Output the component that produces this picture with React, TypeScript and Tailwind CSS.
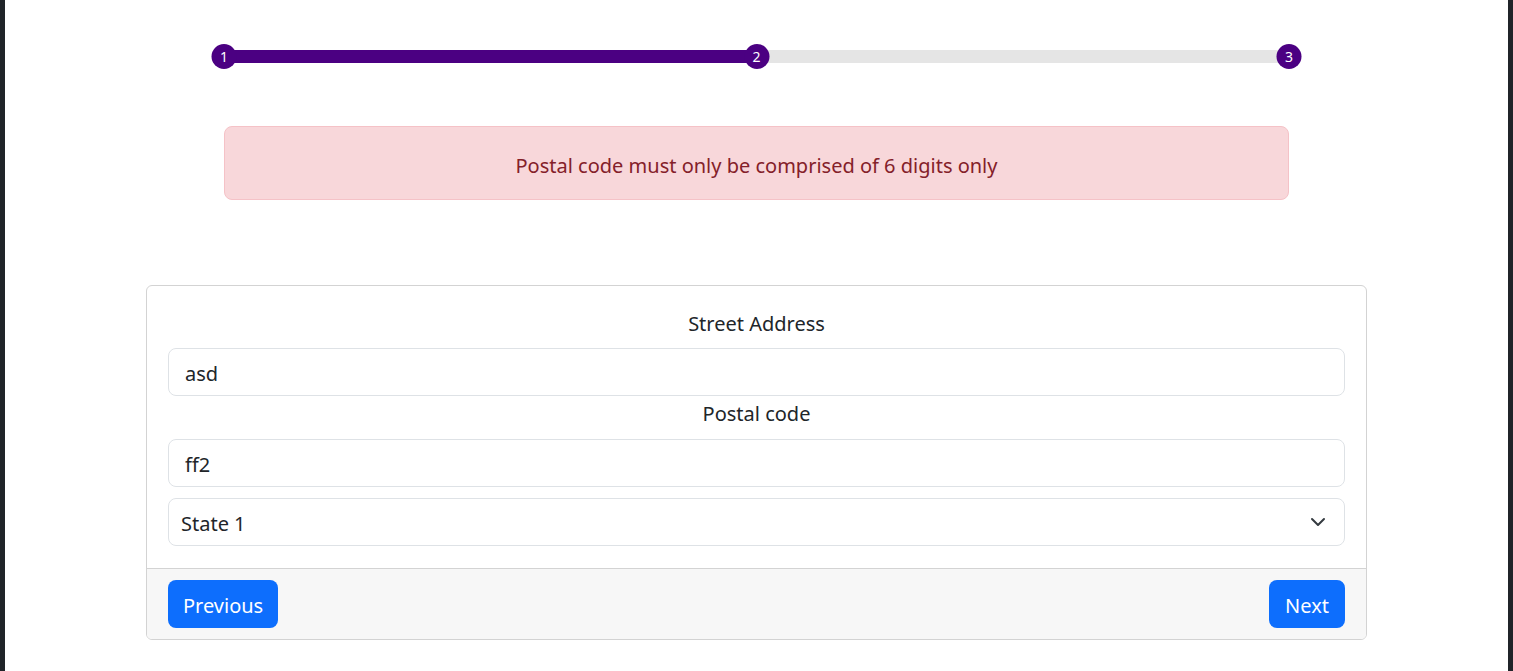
import React from 'react';

const steps = [1, 2, 3];

function Stepper({ current }: { current: number }) {
  const pct = ((current - 1) / (steps.length - 1)) * 100;
  return (
    <div className="relative mx-auto h-[25px] w-[1065px]">
      <div className="absolute left-0 right-0 top-[6px] h-[13px] bg-[#e5e5e5]">
        <div className="h-full bg-[#4b0082]" style={{ width: `${pct}%` }} />
      </div>
      {steps.map((s, i) => (
        <div
          key={s}
          className="absolute top-0 flex h-[25px] w-[25px] -translate-x-1/2 items-center justify-center rounded-full bg-[#4b0082] text-[14px] text-white"
          style={{ left: `${(i / (steps.length - 1)) * 100}%` }}
        >
          {s}
        </div>
      ))}
    </div>
  );
}

export default function App() {
  return (
    <div
      className="flex min-h-[671px] bg-white text-[#212529]"
      style={{ fontFamily: '"Noto Sans", "Open Sans", sans-serif' }}
    >
      <div className="w-[5px] shrink-0 bg-[#202429]" />
      <div className="flex-1 pt-[44px]">
        <Stepper current={2} />

        <div className="mx-auto mt-[57px] w-[1065px] rounded-lg border border-[#f5c2c7] bg-[#f8d7da] pt-[24px] pb-[18px] text-center text-[20px] leading-[30px] text-[#842029]">
          Postal code must only be comprised of 6 digits only
        </div>

        <div className="mx-auto mt-[85px] w-[1221px] overflow-hidden rounded-md border border-[#d3d3d3]">
          <div className="px-[21px] pt-[23px] pb-[22px]">
            <label className="mb-[9px] block text-center text-[20px] leading-[30px]">Street Address</label>
            <input
              defaultValue="asd"
              className="block h-[48px] w-full rounded-lg border border-[#dee2e6] px-4 pt-[3px] text-[20px] text-[#212529] outline-none"
            />
            <label className="mt-[3px] mb-[10px] block text-center text-[20px] leading-[30px]">Postal code</label>
            <input
              defaultValue="ff2"
              className="block h-[48px] w-full rounded-lg border border-[#dee2e6] px-4 pt-[3px] text-[20px] text-[#212529] outline-none"
            />
            <div className="relative mt-[11px]">
              <select className="block h-[48px] w-full appearance-none rounded-lg border border-[#dee2e6] bg-white pl-3 pr-9 pt-[3px] text-[20px] text-[#212529] outline-none">
                <option>State 1</option>
                <option>State 2</option>
              </select>
              <svg
                className="pointer-events-none absolute right-[19px] top-[16px] h-[16px] w-[16px]"
                viewBox="0 0 16 16"
                fill="none"
                stroke="#343a40"
                strokeWidth="2"
                strokeLinecap="round"
                strokeLinejoin="round"
              >
                <path d="m2 5 6 6 6-6" />
              </svg>
            </div>
          </div>
          <div className="flex items-center justify-between border-t border-[#d3d3d3] bg-[#f7f7f7] px-[21px] py-[11px]">
            <button className="h-[48px] rounded-lg bg-[#0d6efd] px-[15px] pt-[3px] text-[20px] text-white">Previous</button>
            <button className="h-[48px] rounded-lg bg-[#0d6efd] px-4 pt-[3px] text-[20px] text-white">Next</button>
          </div>
        </div>
      </div>
      <div className="w-[5px] shrink-0 bg-[#202429]" />
    </div>
  );
}
